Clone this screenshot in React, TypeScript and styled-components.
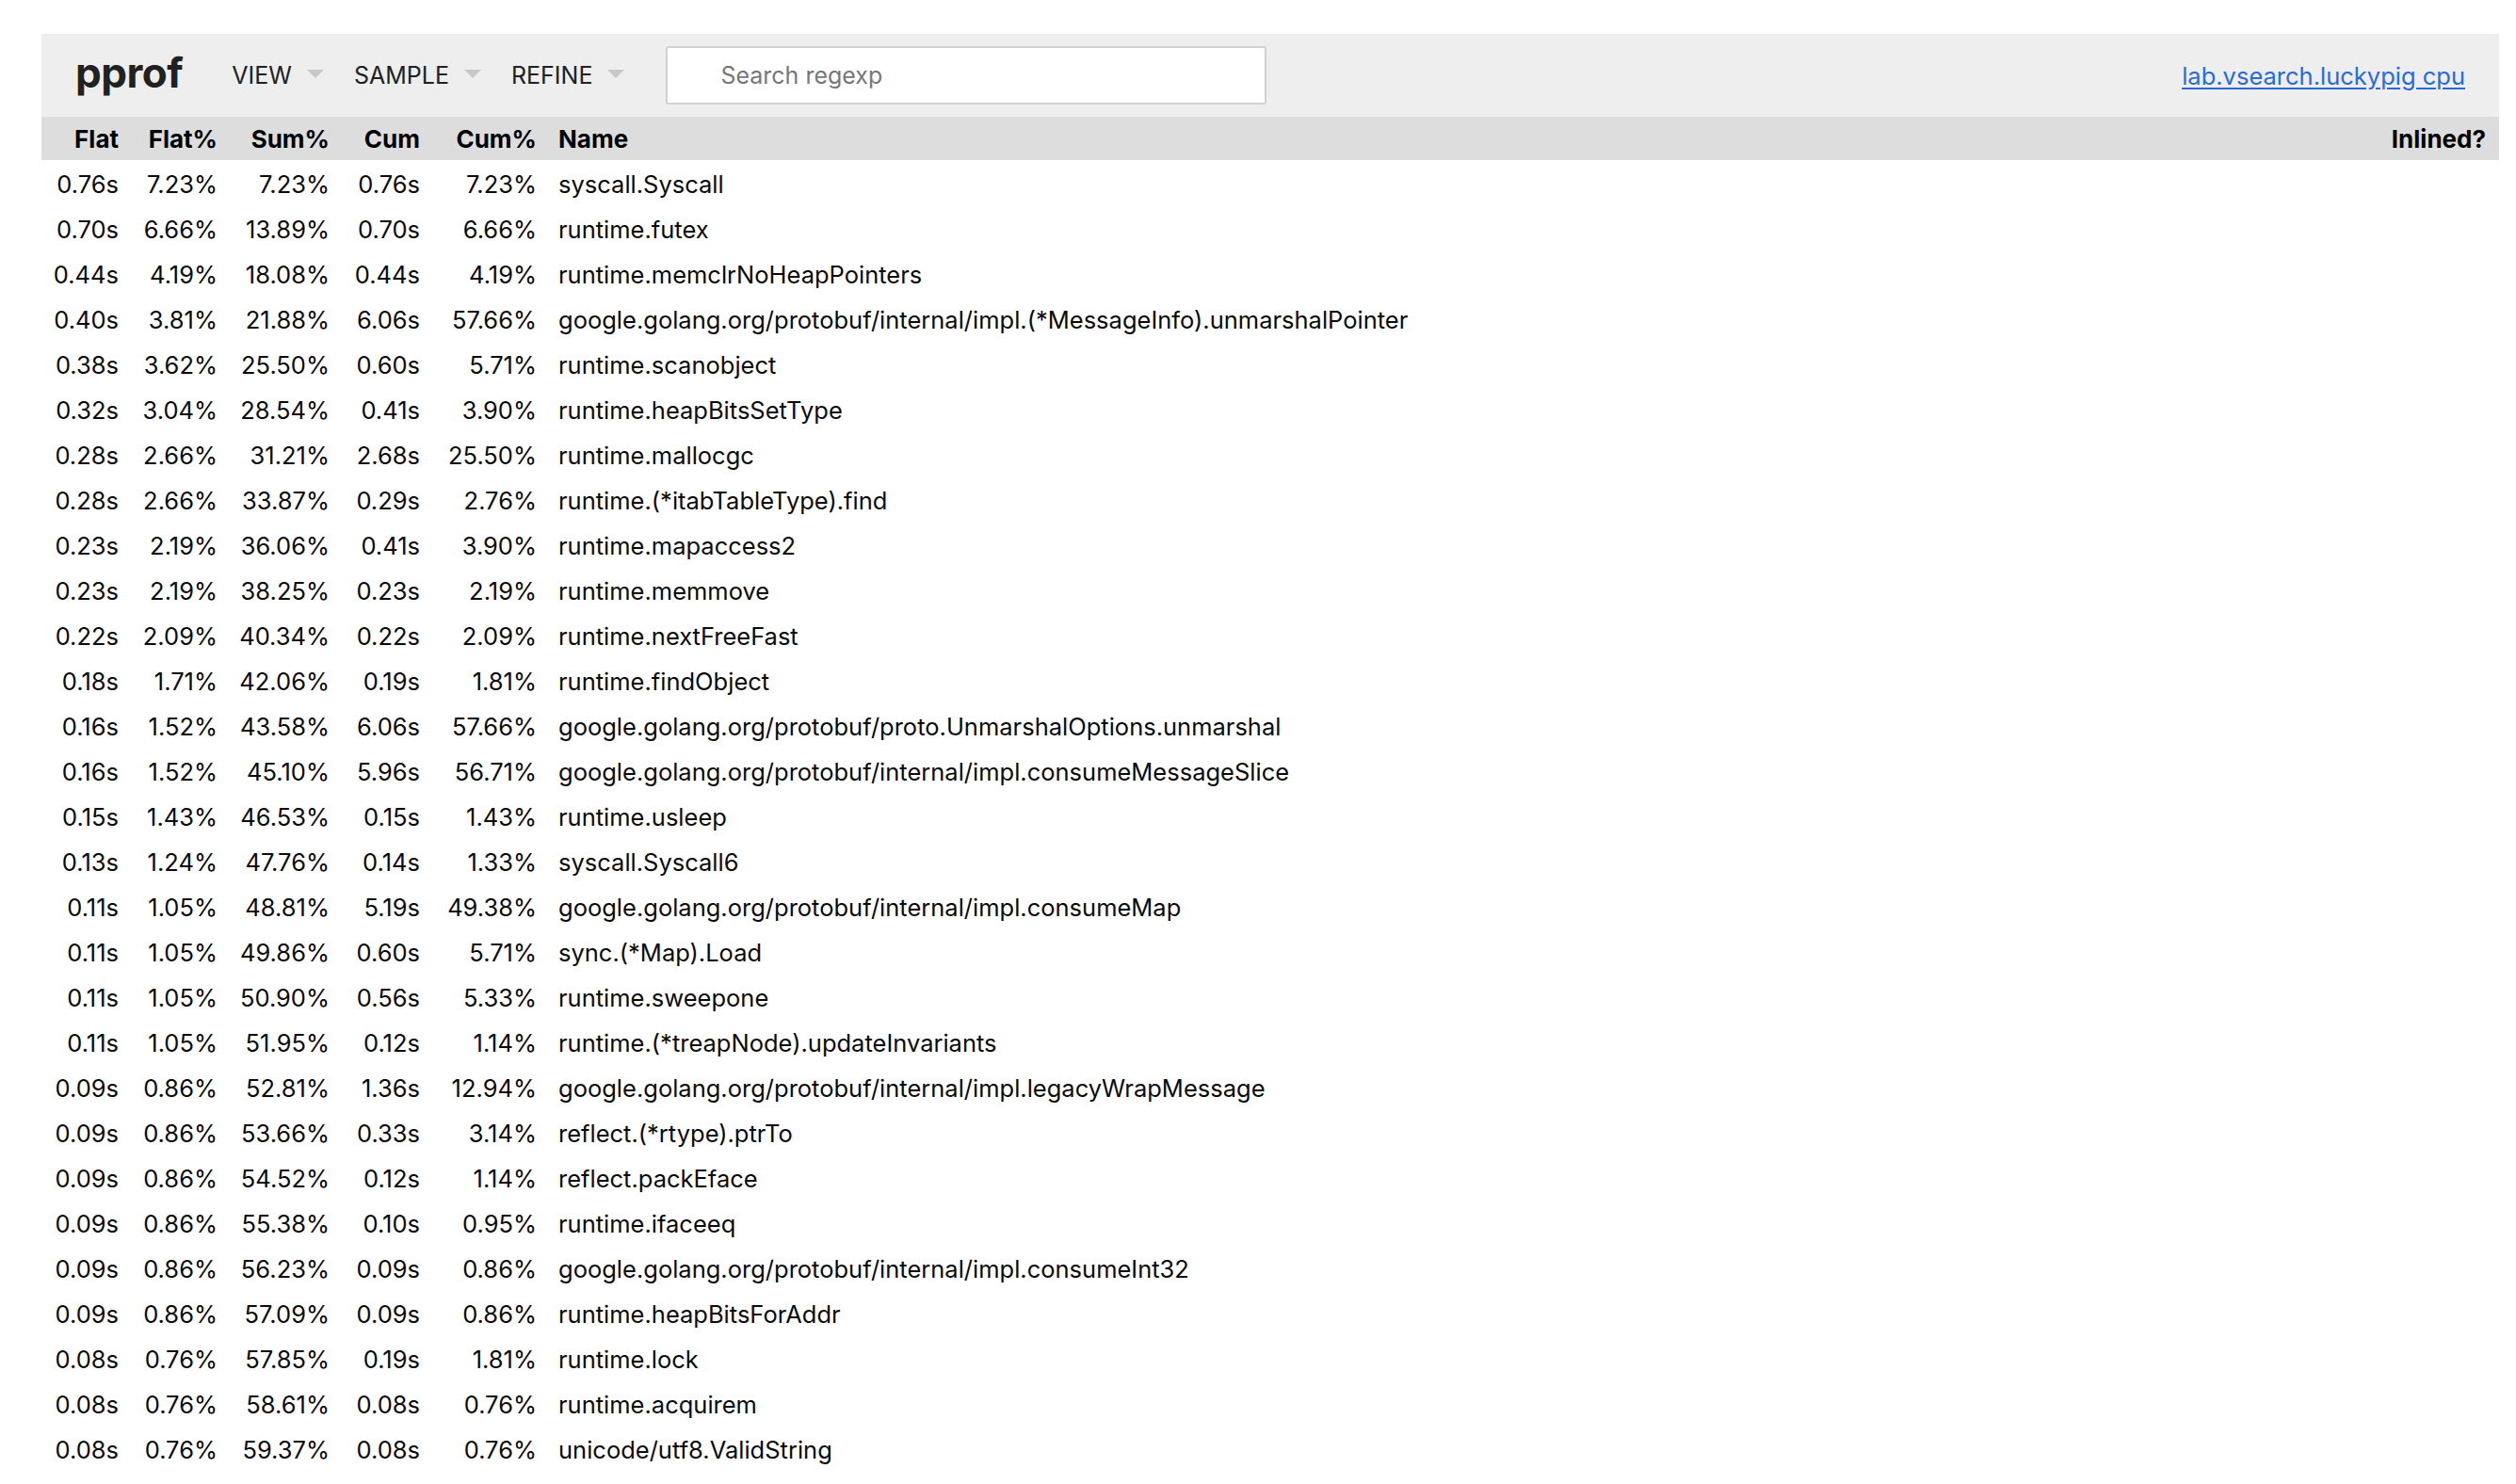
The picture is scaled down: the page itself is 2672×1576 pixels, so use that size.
import React from "react";
import styled, { createGlobalStyle } from "styled-components";

const Global = createGlobalStyle`
  * { box-sizing: border-box; margin: 0; padding: 0; }
  html, body { background: #ffffff; }
  body {
    margin: 0;
    font-family: Inter, "Noto Sans", "Liberation Sans", sans-serif;
    font-size: 26px;
    color: #000;
  }
`;

const Page = styled.div`
  padding: 36px 18px 0 44px;
`;

const Header = styled.header`
  display: flex;
  align-items: center;
  height: 88px;
  background: #eeeeee;
  color: #212121;
  padding: 0 36px 0 32px;
`;

const Title = styled.h1`
  font-size: 44px;
  font-weight: 700;
  letter-spacing: -0.5px;
  color: #212121;
  margin: 0 36px 6px 4px;
`;

const MenuItem = styled.div`
  display: flex;
  align-items: center;
  height: 88px;
  padding: 0 13px;
  margin: 0 3px;
  font-size: 25px;
  color: #212121;
  text-transform: uppercase;
`;

const DownArrow = styled.i`
  display: inline-block;
  width: 0;
  height: 0;
  margin-left: 16px;
  margin-bottom: 3px;
  border-top: 9px solid #c8c8c8;
  border-left: 9px solid transparent;
  border-right: 9px solid transparent;
`;

const Search = styled.input`
  width: 638px;
  height: 62px;
  margin: 0 0 0 28px;
  padding: 0 0 0 56px;
  border: 2px solid #d2d2d2;
  border-radius: 3px;
  background: #fff;
  font-family: Inter, "Noto Sans", "Liberation Sans", sans-serif;
  font-size: 25px;
  color: #212121;
  outline: none;
  &::placeholder { color: #777777; }
`;

const Description = styled.div`
  flex: 1;
  text-align: right;
  white-space: nowrap;
`;

const Link = styled.a`
  color: #2a6ad8;
  text-decoration: underline;
  text-underline-offset: 3px;
  font-size: 25.5px;
`;

const Table = styled.table`
  width: 100%;
  border-spacing: 0;
  table-layout: fixed;
  white-space: nowrap;
`;

const Th = styled.th<{ $w?: number; $left?: boolean; $pl?: number; $pr?: number }>`
  ${(p) => (p.$w ? `width: ${p.$w}px;` : "")}
  height: 46px;
  background: #dddddd;
  font-weight: 700;
  font-size: 26px;
  color: #000;
  text-align: ${(p) => (p.$left ? "left" : "right")};
  padding: 0 ${(p) => p.$pr ?? 0}px 0 ${(p) => p.$pl ?? 0}px;
`;

const Td = styled.td<{ $left?: boolean; $pl?: number; $pr?: number }>`
  height: 48px;
  font-size: 25.5px;
  color: #0a0a0a;
  text-align: ${(p) => (p.$left ? "left" : "right")};
  padding: 2px ${(p) => p.$pr ?? 0}px 0 ${(p) => p.$pl ?? 0}px;
  overflow: hidden;
`;

type Row = [string, string, string, string, string, string];

const rows: Row[] = [
  ["0.76s", "7.23%", "7.23%", "0.76s", "7.23%", "syscall.Syscall"],
  ["0.70s", "6.66%", "13.89%", "0.70s", "6.66%", "runtime.futex"],
  ["0.44s", "4.19%", "18.08%", "0.44s", "4.19%", "runtime.memclrNoHeapPointers"],
  ["0.40s", "3.81%", "21.88%", "6.06s", "57.66%", "google.golang.org/protobuf/internal/impl.(*MessageInfo).unmarshalPointer"],
  ["0.38s", "3.62%", "25.50%", "0.60s", "5.71%", "runtime.scanobject"],
  ["0.32s", "3.04%", "28.54%", "0.41s", "3.90%", "runtime.heapBitsSetType"],
  ["0.28s", "2.66%", "31.21%", "2.68s", "25.50%", "runtime.mallocgc"],
  ["0.28s", "2.66%", "33.87%", "0.29s", "2.76%", "runtime.(*itabTableType).find"],
  ["0.23s", "2.19%", "36.06%", "0.41s", "3.90%", "runtime.mapaccess2"],
  ["0.23s", "2.19%", "38.25%", "0.23s", "2.19%", "runtime.memmove"],
  ["0.22s", "2.09%", "40.34%", "0.22s", "2.09%", "runtime.nextFreeFast"],
  ["0.18s", "1.71%", "42.06%", "0.19s", "1.81%", "runtime.findObject"],
  ["0.16s", "1.52%", "43.58%", "6.06s", "57.66%", "google.golang.org/protobuf/proto.UnmarshalOptions.unmarshal"],
  ["0.16s", "1.52%", "45.10%", "5.96s", "56.71%", "google.golang.org/protobuf/internal/impl.consumeMessageSlice"],
  ["0.15s", "1.43%", "46.53%", "0.15s", "1.43%", "runtime.usleep"],
  ["0.13s", "1.24%", "47.76%", "0.14s", "1.33%", "syscall.Syscall6"],
  ["0.11s", "1.05%", "48.81%", "5.19s", "49.38%", "google.golang.org/protobuf/internal/impl.consumeMap"],
  ["0.11s", "1.05%", "49.86%", "0.60s", "5.71%", "sync.(*Map).Load"],
  ["0.11s", "1.05%", "50.90%", "0.56s", "5.33%", "runtime.sweepone"],
  ["0.11s", "1.05%", "51.95%", "0.12s", "1.14%", "runtime.(*treapNode).updateInvariants"],
  ["0.09s", "0.86%", "52.81%", "1.36s", "12.94%", "google.golang.org/protobuf/internal/impl.legacyWrapMessage"],
  ["0.09s", "0.86%", "53.66%", "0.33s", "3.14%", "reflect.(*rtype).ptrTo"],
  ["0.09s", "0.86%", "54.52%", "0.12s", "1.14%", "reflect.packEface"],
  ["0.09s", "0.86%", "55.38%", "0.10s", "0.95%", "runtime.ifaceeq"],
  ["0.09s", "0.86%", "56.23%", "0.09s", "0.86%", "google.golang.org/protobuf/internal/impl.consumeInt32"],
  ["0.09s", "0.86%", "57.09%", "0.09s", "0.86%", "runtime.heapBitsForAddr"],
  ["0.08s", "0.76%", "57.85%", "0.19s", "1.81%", "runtime.lock"],
  ["0.08s", "0.76%", "58.61%", "0.08s", "0.76%", "runtime.acquirem"],
  ["0.08s", "0.76%", "59.37%", "0.08s", "0.76%", "unicode/utf8.ValidString"],
];

const widths = [82, 105, 119, 96, 124];

export default function App() {
  return (
    <>
      <Global />
      <Page>
        <Header>
          <Title>pprof</Title>
          <MenuItem>
            View
            <DownArrow />
          </MenuItem>
          <MenuItem>
            Sample
            <DownArrow />
          </MenuItem>
          <MenuItem>
            Refine
            <DownArrow />
          </MenuItem>
          <Search placeholder="Search regexp" />
          <Description>
            <Link href="#">lab.vsearch.luckypig cpu</Link>
          </Description>
        </Header>
        <Table>
          <thead>
            <tr>
              <Th $w={widths[0]}>Flat</Th>
              <Th $w={widths[1]}>Flat%</Th>
              <Th $w={widths[2]}>Sum%</Th>
              <Th $w={widths[3]}>Cum</Th>
              <Th $w={widths[4]}>Cum%</Th>
              <Th $left $pl={23}>Name</Th>
              <Th $w={160} $pr={14}>Inlined?</Th>
            </tr>
          </thead>
          <tbody>
            {rows.map((r, i) => (
              <tr key={i}>
                <Td>{r[0]}</Td>
                <Td>{r[1]}</Td>
                <Td>{r[2]}</Td>
                <Td>{r[3]}</Td>
                <Td>{r[4]}</Td>
                <Td $left $pl={23}>{r[5]}</Td>
                <Td $pr={14}></Td>
              </tr>
            ))}
          </tbody>
        </Table>
      </Page>
    </>
  );
}
